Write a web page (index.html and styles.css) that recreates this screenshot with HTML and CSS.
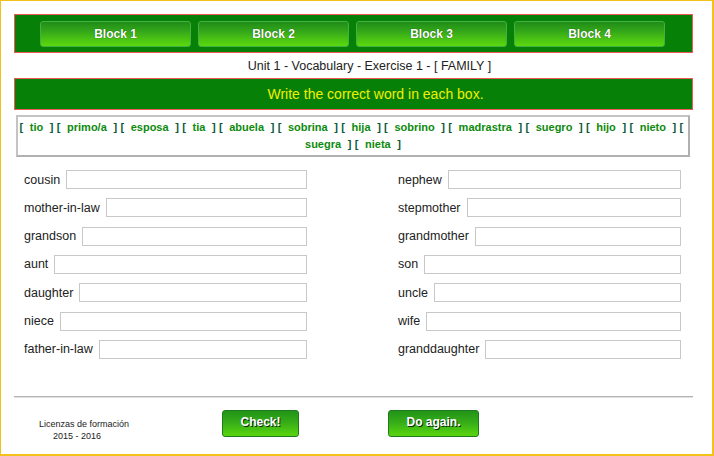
FILE: index.html
```html
<!DOCTYPE html>
<html>
<head>
<meta charset="utf-8">
<link rel="stylesheet" href="styles.css">
</head>
<body>
<div class="frame">
  <div class="nav">
    <div class="nav-btn">Block 1</div>
    <div class="nav-btn">Block 2</div>
    <div class="nav-btn">Block 3</div>
    <div class="nav-btn">Block 4</div>
  </div>
  <div class="title">Unit 1 - Vocabulary - Exercise 1 - [ FAMILY ]</div>
  <div class="instr">Write the correct word in each box.</div>
  <div class="bank">
    <span class="br">[</span>&nbsp; tio &nbsp;<span class="br">]</span> <span class="br">[</span>&nbsp; primo/a &nbsp;<span class="br">]</span> <span class="br">[</span>&nbsp; esposa &nbsp;<span class="br">]</span> <span class="br">[</span>&nbsp; tia &nbsp;<span class="br">]</span> <span class="br">[</span>&nbsp; abuela &nbsp;<span class="br">]</span> <span class="br">[</span>&nbsp; sobrina &nbsp;<span class="br">]</span> <span class="br">[</span>&nbsp; hija &nbsp;<span class="br">]</span> <span class="br">[</span>&nbsp; sobrino &nbsp;<span class="br">]</span> <span class="br">[</span>&nbsp; madrastra &nbsp;<span class="br">]</span> <span class="br">[</span>&nbsp; suegro &nbsp;<span class="br">]</span> <span class="br">[</span>&nbsp; hijo &nbsp;<span class="br">]</span> <span class="br">[</span>&nbsp; nieto &nbsp;<span class="br">]</span> <span class="br">[</span>&nbsp; suegra &nbsp;<span class="br">]</span> <span class="br">[</span>&nbsp; nieta &nbsp;<span class="br">]</span>
  </div>
  <div class="grid">
    <div class="cell"><span class="lbl">cousin</span><span class="box"></span></div>
    <div class="cell"><span class="lbl">nephew</span><span class="box"></span></div>
    <div class="cell"><span class="lbl">mother-in-law</span><span class="box"></span></div>
    <div class="cell"><span class="lbl">stepmother</span><span class="box"></span></div>
    <div class="cell"><span class="lbl">grandson</span><span class="box"></span></div>
    <div class="cell"><span class="lbl">grandmother</span><span class="box"></span></div>
    <div class="cell"><span class="lbl">aunt</span><span class="box"></span></div>
    <div class="cell"><span class="lbl">son</span><span class="box"></span></div>
    <div class="cell"><span class="lbl">daughter</span><span class="box"></span></div>
    <div class="cell"><span class="lbl">uncle</span><span class="box"></span></div>
    <div class="cell"><span class="lbl">niece</span><span class="box"></span></div>
    <div class="cell"><span class="lbl">wife</span><span class="box"></span></div>
    <div class="cell"><span class="lbl">father-in-law</span><span class="box"></span></div>
    <div class="cell"><span class="lbl">granddaughter</span><span class="box"></span></div>
  </div>
  <div class="rule"></div>
  <div class="footer">
    <div class="credits">
      <div>Licenzas de formación</div>
      <div class="year">2015 - 2016</div>
    </div>
    <div class="act act-check">Check!</div>
    <div class="act act-again">Do again.</div>
  </div>
</div>
</body>
</html>
```
FILE: styles.css
```css
html, body {
  margin: 0;
  padding: 0;
  background: #ffffff;
}
.frame {
  box-sizing: border-box;
  width: 714px;
  height: 456px;
  border-top: 1px solid #f2c21b;
  border-left: 1px solid #f2c21b;
  border-right: 2px solid #f2c21b;
  border-bottom: 2px solid #f2c21b;
  padding: 13px 0 0 13px;
  font-family: "Liberation Sans", Arial, sans-serif;
  color: #222;
}
.nav {
  box-sizing: border-box;
  width: 679px;
  height: 39px;
  background: #078007;
  border: 1px solid #f25858;
  display: flex;
  justify-content: center;
  align-items: center;
  gap: 7px;
  padding-left: 0;
  padding-right: 2px;
}
.nav-btn {
  box-sizing: border-box;
  width: 151px;
  height: 26px;
  border: 1px solid #44b044;
  border-radius: 3px;
  background: linear-gradient(to bottom, #1f8c18 0%, #35a81a 40%, #4cc612 75%, #5ad80e 100%);
  color: #ffffff;
  font-weight: bold;
  font-size: 12px;
  line-height: 24px;
  text-align: center;
  text-shadow: 0 0 1px #0a3a0a;
}
.title {
  box-sizing: border-box;
  width: 679px;
  height: 25px;
  padding-left: 32px;
  line-height: 26px;
  text-align: center;
  font-size: 12.5px;
  color: #222;
}
.instr {
  box-sizing: border-box;
  width: 679px;
  height: 32px;
  padding-left: 44px;
  background: #078007;
  border: 1px solid #f25858;
  color: #f0f000;
  font-size: 14px;
  line-height: 30px;
  text-align: center;
}
.bank {
  box-sizing: border-box;
  width: 674px;
  height: 42px;
  margin: 5px 0 0 2px;
  border: 2px solid #c4c4c4;
  border-right-color: #b0b0b0;
  border-bottom-color: #b0b0b0;
  padding: 2px 0 0 0;
  text-align: center;
  font-size: 11px;
  line-height: 17px;
  font-weight: bold;
  color: #0d8a0d;
  word-spacing: 0.25px;
}
.br {
  color: #0a5a3a;
}
.grid {
  display: grid;
  grid-template-columns: 283px 283px;
  column-gap: 91px;
  row-gap: 9.33px;
  margin: 13px 0 0 10px;
}
.cell {
  display: flex;
  align-items: center;
  height: 19px;
}
.lbl {
  font-size: 12.5px;
  color: #222;
  margin-right: 6px;
  white-space: nowrap;
}
.box {
  flex: 1;
  height: 19px;
  box-sizing: border-box;
  border: 1px solid #c8c8c8;
  background: #ffffff;
}
.rule {
  width: 679px;
  height: 0;
  border-top: 1px solid #b4b4b4;
  border-bottom: 1px solid #e0e0e0;
  margin-top: 37px;
}
.footer {
  display: flex;
  align-items: flex-start;
  margin-top: 12px;
}
.credits {
  width: 182px;
  padding: 8px 0 0 25px;
  box-sizing: border-box;
  font-size: 9px;
  line-height: 12px;
  color: #222;
}
.year {
  padding-left: 14px;
}
.act {
  box-sizing: border-box;
  height: 27px;
  border: 1px solid #1e7a1e;
  border-radius: 3px;
  background: linear-gradient(to bottom, #229418 0%, #36ac18 45%, #4cc812 80%, #5ad40e 100%);
  color: #ffffff;
  font-weight: bold;
  font-size: 12px;
  line-height: 22px;
  text-align: center;
  text-shadow: 1px 1px 0 #0a2a0a;
}
.act-check {
  width: 77px;
  margin-left: 26px;
}
.act-again {
  width: 91px;
  margin-left: 89px;
}
```
